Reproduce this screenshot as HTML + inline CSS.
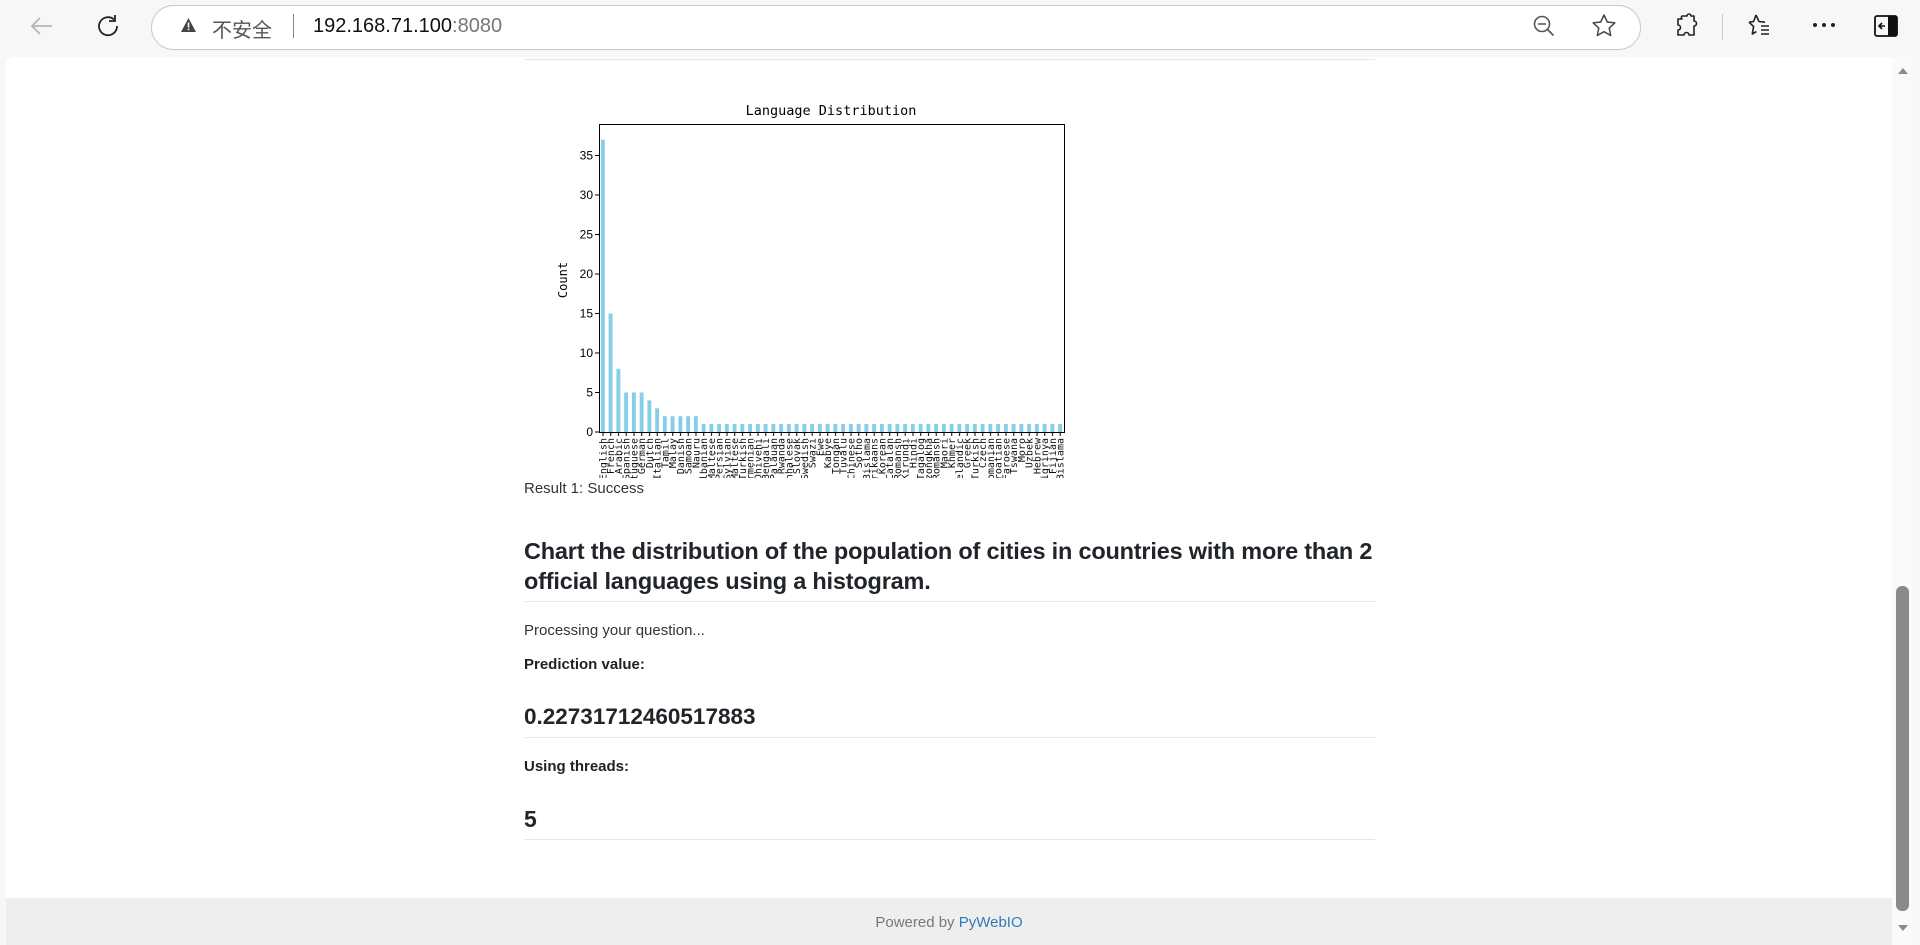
<!DOCTYPE html>
<html><head><meta charset="utf-8"><style>
*{margin:0;padding:0;box-sizing:border-box}
html,body{width:1920px;height:945px;overflow:hidden;background:#f7f7f7;font-family:"Liberation Sans","Noto Sans CJK SC",sans-serif}
.abs{position:absolute}
#bar{left:0;top:0;width:1920px;height:57px;background:#f7f7f7}
#addr{left:151px;top:5px;width:1490px;height:45px;border:1px solid #c8c8c8;border-radius:23px;background:#fff}
#page{left:6px;top:57px;width:1907px;height:888px;background:#fff;border-radius:8px 8px 0 0;overflow:hidden}
.t{position:absolute;left:524px;color:#212529;white-space:nowrap}
.hr{position:absolute;left:524px;width:851px;height:1px;background:#e6e6e6}
</style></head><body>
<div id="bar" class="abs">
<svg class="abs" style="left:28px;top:14px" width="28" height="24" viewBox="0 0 28 24"><path d="M24 12H4M12 4L4 12l8 8" fill="none" stroke="#b5b5b5" stroke-width="1.8"/></svg>
<svg class="abs" style="left:95px;top:13px" width="26" height="26" viewBox="0 0 26 26"><path d="M19 6.5A9 9 0 1 0 22 13" fill="none" stroke="#222" stroke-width="1.8"/><path d="M20 2v6h-6" fill="none" stroke="#222" stroke-width="1.8"/></svg>
<div id="addr" class="abs"></div>
<svg class="abs" style="left:180px;top:17px" width="17" height="16" viewBox="0 0 17 16"><path d="M8.5 1L16 15H1z" fill="#444"/><rect x="7.7" y="5.5" width="1.6" height="5" fill="#fff"/><rect x="7.7" y="11.6" width="1.6" height="1.6" fill="#fff"/></svg>
<div class="abs" style="left:212px;top:14px;font-size:20px;color:#555">不安全</div>
<div class="abs" style="left:293px;top:14px;width:1px;height:24px;background:#888"></div>
<div class="abs" style="left:313px;top:15px;font-size:20px;color:#111">192.168.71.100<span style="color:#777">:8080</span></div>
<svg class="abs" style="left:1532px;top:14px" width="26" height="26" viewBox="0 0 26 26"><circle cx="10" cy="10" r="7.5" fill="none" stroke="#555" stroke-width="1.6"/><path d="M6 10h8M15.5 15.5l6 6" stroke="#555" stroke-width="1.6"/></svg>
<svg class="abs" style="left:1591px;top:13px" width="26" height="26" viewBox="0 0 26 26"><path d="M13 2l3.3 7 7.5.9-5.6 5.1 1.5 7.5L13 18.7l-6.7 3.8 1.5-7.5L2.2 9.9 9.7 9z" fill="none" stroke="#444" stroke-width="1.5" stroke-linejoin="round"/></svg>
<svg class="abs" style="left:1673px;top:13px" width="26" height="26" viewBox="0 0 26 26"><path d="M9 3h5a2 2 0 0 1 4 0v0h3v5a2.5 2.5 0 0 1 0 5v9h-5a2.5 2.5 0 0 0-5 0H5v-5a2.5 2.5 0 0 0 0-5V6h4a2 2 0 0 1 0-3z" fill="none" stroke="#222" stroke-width="1.6" stroke-linejoin="round"/></svg>
<div class="abs" style="left:1722px;top:14px;width:1px;height:26px;background:#ccc"></div>
<svg class="abs" style="left:1745px;top:13px" width="28" height="26" viewBox="0 0 28 26"><path d="M11 2l3 6.5 6 .7M4 9.2l5-.7M4 9.2l4.6 4.3L7.3 21l4.2-2.4" fill="none" stroke="#222" stroke-width="1.6" stroke-linejoin="round"/><path d="M11 2L8.6 8.5M16 13h8M16 17h8M16 21h8" stroke="#222" stroke-width="1.6"/></svg>
<svg class="abs" style="left:1812px;top:22px" width="24" height="6" viewBox="0 0 24 6"><circle cx="3" cy="3" r="2" fill="#222"/><circle cx="12" cy="3" r="2" fill="#222"/><circle cx="21" cy="3" r="2" fill="#222"/></svg>
<svg class="abs" style="left:1874px;top:15px" width="24" height="22" viewBox="0 0 24 22"><rect x="1" y="1" width="22" height="20" rx="2" fill="none" stroke="#111" stroke-width="1.8"/><rect x="14" y="1" width="9" height="20" fill="#111"/><path d="M11 11H5M8 8l-3 3 3 3" fill="none" stroke="#111" stroke-width="1.6"/></svg>
</div>

<div id="page" class="abs"></div>
<div class="hr" style="top:59px"></div>

<svg class="abs" style="left:551px;top:98px" width="520" height="380" viewBox="551 98 520 380">
<defs>
<pattern id="b1" x="599" y="0" width="7.75" height="10" patternUnits="userSpaceOnUse"><rect x="1.9" y="0" width="3.9" height="10" fill="#87ceeb"/></pattern>
<pattern id="tk" x="599" y="0" width="7.75" height="10" patternUnits="userSpaceOnUse"><rect x="3.5" y="0" width="1" height="10" fill="#000"/></pattern>
</defs>
<text x="831" y="115" font-family="DejaVu Sans Mono,Liberation Mono,monospace" font-size="13.5" text-anchor="middle">Language Distribution</text>
<g fill="#87ceeb">
<rect x="600.9" y="139.7" width="3.9" height="292.3"/>
<rect x="608.65" y="313.5" width="3.9" height="118.5"/>
<rect x="616.4" y="368.8" width="3.9" height="63.2"/>
<rect x="624.15" y="392.5" width="3.9" height="39.5"/>
<rect x="631.9" y="392.5" width="3.9" height="39.5"/>
<rect x="639.65" y="392.5" width="3.9" height="39.5"/>
<rect x="647.4" y="400.4" width="3.9" height="31.6"/>
<rect x="655.15" y="408.3" width="3.9" height="23.7"/>
<rect x="662.9" y="416.2" width="3.9" height="15.8"/>
<rect x="670.65" y="416.2" width="3.9" height="15.8"/>
<rect x="678.4" y="416.2" width="3.9" height="15.8"/>
<rect x="686.15" y="416.2" width="3.9" height="15.8"/>
<rect x="693.9" y="416.2" width="3.9" height="15.8"/>
</g>
<rect x="699.75" y="424.1" width="364" height="7.9" fill="url(#b1)"/>
<rect x="599.5" y="124.5" width="465" height="308" fill="none" stroke="#000" stroke-width="1"/>
<rect x="599" y="432" width="465" height="4" fill="url(#tk)"/>
<g font-family="Liberation Sans,sans-serif" font-size="12" text-anchor="end">
<text x="593" y="436">0</text><text x="593" y="396.5">5</text><text x="593" y="357">10</text><text x="593" y="317.5">15</text><text x="593" y="278">20</text><text x="593" y="238.5">25</text><text x="593" y="199">30</text><text x="593" y="159.5">35</text>
</g>
<g stroke="#000"><path d="M595 432h4M595 392.5h4M595 353h4M595 313.5h4M595 274h4M595 234.5h4M595 195h4M595 155.5h4"/></g>
<text transform="translate(567,280) rotate(-90)" font-family="DejaVu Sans Mono,monospace" font-size="12" text-anchor="middle">Count</text>
<g font-family="DejaVu Sans Mono,Liberation Mono,monospace" font-size="10" fill="#111">
<text transform="translate(606.4,438) rotate(-90)" text-anchor="end">English</text>
<text transform="translate(614.15,438) rotate(-90)" text-anchor="end">French</text>
<text transform="translate(621.9,438) rotate(-90)" text-anchor="end">Arabic</text>
<text transform="translate(629.65,438) rotate(-90)" text-anchor="end">Spanish</text>
<text transform="translate(637.4,438) rotate(-90)" text-anchor="end">Portuguese</text>
<text transform="translate(645.15,438) rotate(-90)" text-anchor="end">German</text>
<text transform="translate(652.9,438) rotate(-90)" text-anchor="end">Dutch</text>
<text transform="translate(660.65,438) rotate(-90)" text-anchor="end">Italian</text>
<text transform="translate(668.4,438) rotate(-90)" text-anchor="end">Tamil</text>
<text transform="translate(676.15,438) rotate(-90)" text-anchor="end">Malay</text>
<text transform="translate(683.9,438) rotate(-90)" text-anchor="end">Danish</text>
<text transform="translate(691.65,438) rotate(-90)" text-anchor="end">Samoan</text>
<text transform="translate(699.4,438) rotate(-90)" text-anchor="end">Nauru</text>
<text transform="translate(707.15,438) rotate(-90)" text-anchor="end">Albanian</text>
<text transform="translate(714.9,438) rotate(-90)" text-anchor="end">Maltese</text>
<text transform="translate(722.65,438) rotate(-90)" text-anchor="end">Persian</text>
<text transform="translate(730.4,438) rotate(-90)" text-anchor="end">Sylvian</text>
<text transform="translate(738.15,438) rotate(-90)" text-anchor="end">Maltese</text>
<text transform="translate(745.9,438) rotate(-90)" text-anchor="end">Turkish</text>
<text transform="translate(753.65,438) rotate(-90)" text-anchor="end">Armenian</text>
<text transform="translate(761.4,438) rotate(-90)" text-anchor="end">Dhivehi</text>
<text transform="translate(769.15,438) rotate(-90)" text-anchor="end">Bengali</text>
<text transform="translate(776.9,438) rotate(-90)" text-anchor="end">Palauan</text>
<text transform="translate(784.65,438) rotate(-90)" text-anchor="end">Rwanda</text>
<text transform="translate(792.4,438) rotate(-90)" text-anchor="end">Sinhalese</text>
<text transform="translate(800.15,438) rotate(-90)" text-anchor="end">Slovak</text>
<text transform="translate(807.9,438) rotate(-90)" text-anchor="end">Swedish</text>
<text transform="translate(815.65,438) rotate(-90)" text-anchor="end">Swazi</text>
<text transform="translate(823.4,438) rotate(-90)" text-anchor="end">Ewe</text>
<text transform="translate(831.15,438) rotate(-90)" text-anchor="end">Kabye</text>
<text transform="translate(838.9,438) rotate(-90)" text-anchor="end">Tongan</text>
<text transform="translate(846.65,438) rotate(-90)" text-anchor="end">Tuvalu</text>
<text transform="translate(854.4,438) rotate(-90)" text-anchor="end">Chinese</text>
<text transform="translate(862.15,438) rotate(-90)" text-anchor="end">Sotho</text>
<text transform="translate(869.9,438) rotate(-90)" text-anchor="end">Bislama</text>
<text transform="translate(877.65,438) rotate(-90)" text-anchor="end">Afrikaans</text>
<text transform="translate(885.4,438) rotate(-90)" text-anchor="end">Korean</text>
<text transform="translate(893.15,438) rotate(-90)" text-anchor="end">Catalan</text>
<text transform="translate(900.9,438) rotate(-90)" text-anchor="end">Romansh</text>
<text transform="translate(908.65,438) rotate(-90)" text-anchor="end">Kirundi</text>
<text transform="translate(916.4,438) rotate(-90)" text-anchor="end">Hindi</text>
<text transform="translate(924.15,438) rotate(-90)" text-anchor="end">Tagalog</text>
<text transform="translate(931.9,438) rotate(-90)" text-anchor="end">Dzongkha</text>
<text transform="translate(939.65,438) rotate(-90)" text-anchor="end">Romansh</text>
<text transform="translate(947.4,438) rotate(-90)" text-anchor="end">Maori</text>
<text transform="translate(955.15,438) rotate(-90)" text-anchor="end">Khmer</text>
<text transform="translate(962.9,438) rotate(-90)" text-anchor="end">Icelandic</text>
<text transform="translate(970.65,438) rotate(-90)" text-anchor="end">Greek</text>
<text transform="translate(978.4,438) rotate(-90)" text-anchor="end">Turkish</text>
<text transform="translate(986.15,438) rotate(-90)" text-anchor="end">Czech</text>
<text transform="translate(993.9,438) rotate(-90)" text-anchor="end">Romanian</text>
<text transform="translate(1001.65,438) rotate(-90)" text-anchor="end">Croatian</text>
<text transform="translate(1009.4,438) rotate(-90)" text-anchor="end">Faroese</text>
<text transform="translate(1017.15,438) rotate(-90)" text-anchor="end">Tswana</text>
<text transform="translate(1024.9,438) rotate(-90)" text-anchor="end">Moro</text>
<text transform="translate(1032.65,438) rotate(-90)" text-anchor="end">Uzbek</text>
<text transform="translate(1040.4,438) rotate(-90)" text-anchor="end">Hebrew</text>
<text transform="translate(1048.15,438) rotate(-90)" text-anchor="end">Tigrinya</text>
<text transform="translate(1055.9,438) rotate(-90)" text-anchor="end">Fijian</text>
<text transform="translate(1063.65,438) rotate(-90)" text-anchor="end">Bislama</text>
</g>
</svg>

<div class="t" style="top:480px;font-size:15px;color:#333">Result 1: Success</div>
<div class="t" style="top:536px;font-size:23.5px;font-weight:bold;line-height:30px;color:#212529;letter-spacing:-0.2px">Chart the distribution of the population of cities in countries with more than 2<br>official languages using a histogram.</div>
<div class="hr" style="top:601px"></div>
<div class="t" style="top:622px;font-size:15px;color:#333">Processing your question...</div>
<div class="t" style="top:656px;font-size:15px;font-weight:bold;color:#222">Prediction value:</div>
<div class="t" style="top:704px;font-size:22.5px;font-weight:bold;color:#212529">0.22731712460517883</div>
<div class="hr" style="top:737px"></div>
<div class="t" style="top:758px;font-size:15px;font-weight:bold;color:#222">Using threads:</div>
<div class="t" style="top:806px;font-size:23px;font-weight:bold;color:#212529">5</div>
<div class="hr" style="top:839px"></div>

<div class="abs" style="left:6px;top:898px;width:1886px;height:47px;background:#eeeeee"></div>
<div class="abs" style="left:6px;top:914px;width:1886px;text-align:center;font-size:15px;color:#777">Powered by <span style="color:#337ab7">PyWebIO</span></div>

<div class="abs" style="left:1892px;top:57px;width:21px;height:888px;background:#fafafa"></div>
<svg class="abs" style="left:1896px;top:66px" width="14" height="10" viewBox="0 0 14 10"><path d="M7 2l5 6H2z" fill="#8a8a8a"/></svg>
<div class="abs" style="left:1896px;top:586px;width:13px;height:325px;background:#8a8a88;border-radius:6px"></div>
<svg class="abs" style="left:1896px;top:923px" width="14" height="10" viewBox="0 0 14 10"><path d="M2 2h10L7 8z" fill="#8a8a8a"/></svg>
</body></html>
